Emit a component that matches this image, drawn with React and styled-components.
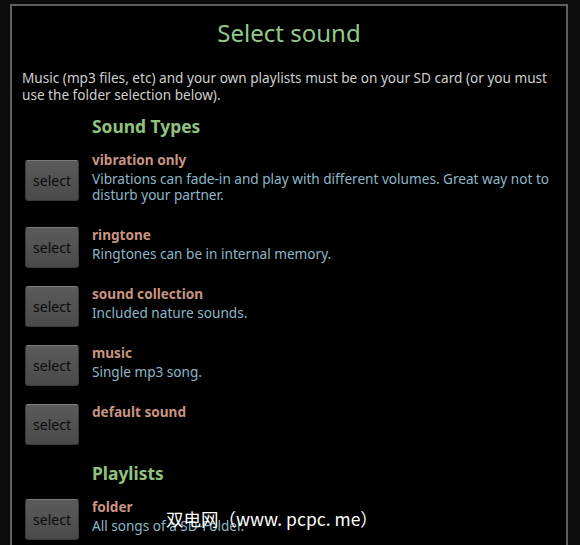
import React from "react";
import styled, { createGlobalStyle } from "styled-components";

const GlobalStyle = createGlobalStyle`
  html, body {
    margin: 0;
    padding: 0;
    background: #0c0c0c;
  }
  body {
    font-family: "Noto Sans", "Open Sans", sans-serif;
  }
`;

const Screen = styled.div`
  position: relative;
  width: 580px;
  height: 545px;
  padding: 4px 12px 0 10px;
  box-sizing: border-box;
  overflow: hidden;
`;

const Dialog = styled.div`
  height: 100%;
  box-sizing: border-box;
  background: #000;
  border: 2px solid #5e5e5e;
  border-bottom: none;
  padding: 11px 10px 0 10px;
`;

const Title = styled.h1`
  margin: 0;
  text-align: center;
  font-size: 24px;
  line-height: 32px;
  font-weight: 400;
  color: #93c98b;
`;

const Intro = styled.p`
  margin: 20px 0 0;
  font-size: 13.6px;
  line-height: 17px;
  color: #cfcfcf;
`;

const SectionHeader = styled.h2`
  margin: ${(p) => p.$gap || 12}px 0 0 70px;
  font-size: 17.4px;
  line-height: 22px;
  font-weight: 700;
  color: #8fc37f;
`;

const Row = styled.div`
  display: flex;
  align-items: center;
  gap: 13px;
  margin-top: 12px;
  padding-left: 3px;
`;

const SelectButton = styled.button`
  flex: none;
  width: 54px;
  height: 41px;
  box-sizing: border-box;
  border: 1px solid #3a3a3a;
  border-top-color: #7c7c7c;
  border-radius: 3px;
  background: linear-gradient(#5a5a5a, #4a4a4a);
  color: #0a0a0a;
  font-family: "Noto Sans", sans-serif;
  font-size: 14px;
  padding: 0;
`;

const ItemText = styled.div`
  flex: 1;
  padding-bottom: 9px;
`;

const ItemTitle = styled.div`
  font-size: 13.6px;
  line-height: 22px;
  font-weight: 700;
  color: #c99481;
`;

const ItemDesc = styled.div`
  font-size: 13.6px;
  line-height: 16px;
  color: #8db7c8;
`;

const Watermark = styled.div`
  position: absolute;
  left: 166px;
  top: 508px;
  font-family: "Noto Sans CJK SC", sans-serif;
  font-size: 17.5px;
  line-height: 22px;
  color: #ffffff;
  white-space: nowrap;
`;

const soundTypes = [
  {
    title: "vibration only",
    desc: "Vibrations can fade-in and play with different volumes. Great way not to disturb your partner.",
  },
  { title: "ringtone", desc: "Ringtones can be in internal memory." },
  { title: "sound collection", desc: "Included nature sounds." },
  { title: "music", desc: "Single mp3 song." },
  { title: "default sound", desc: "" },
];

const playlists = [{ title: "folder", desc: "All songs of a SD-Folder." }];

const Item = ({ title, desc }) => (
  <Row>
    <SelectButton>select</SelectButton>
    <ItemText>
      <ItemTitle>{title}</ItemTitle>
      <ItemDesc>{desc || "\u00a0"}</ItemDesc>
    </ItemText>
  </Row>
);

export default function App() {
  return (
    <>
      <GlobalStyle />
      <Screen>
        <Dialog>
          <Title>Select sound</Title>
          <Intro>
            Music (mp3 files, etc) and your own playlists must be on your SD
            card (or you must use the folder selection below).
          </Intro>
          <SectionHeader>Sound Types</SectionHeader>
          {soundTypes.map((s) => (
            <Item key={s.title} {...s} />
          ))}
          <SectionHeader $gap={14}>Playlists</SectionHeader>
          {playlists.map((s) => (
            <Item key={s.title} {...s} />
          ))}
        </Dialog>
        <Watermark>双电网（www. pcpc. me）</Watermark>
      </Screen>
    </>
  );
}
